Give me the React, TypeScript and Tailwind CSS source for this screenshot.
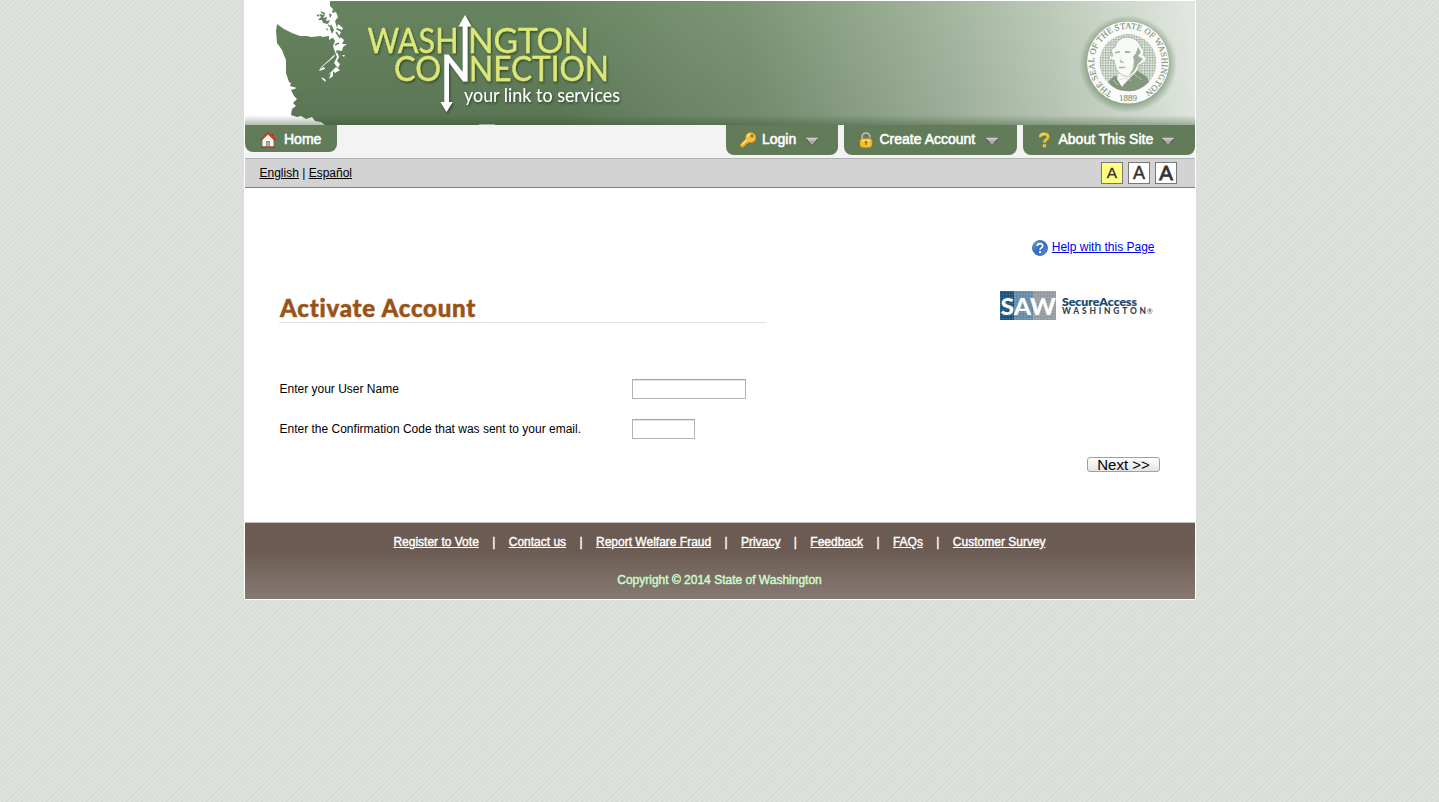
import type { ReactNode } from "react";

const TILE =
  "bg-[#d6dcd6] bg-[repeating-linear-gradient(135deg,rgba(255,255,255,0.18)_0px,rgba(255,255,255,0.18)_1px,transparent_2px,transparent_3.535px),repeating-linear-gradient(45deg,rgba(255,255,255,0.07)_0px,transparent_3px,transparent_7.07px)]";

function Banner() {
  return (
    <svg
      viewBox="245 1 950 124"
      className="block h-[124px] w-[950px]"
      fontFamily="Lato, 'Open Sans', sans-serif"
    >
      <defs>
        <linearGradient id="field" x1="0" y1="0" x2="0" y2="1">
          <stop offset="0" stopColor="#67845f" />
          <stop offset="1" stopColor="#5a7554" />
        </linearGradient>
        <linearGradient id="fade" gradientUnits="userSpaceOnUse" x1="560" y1="110" x2="1190" y2="20">
          <stop offset="0" stopColor="#dfe5dd" stopOpacity="0" />
          <stop offset="0.3" stopColor="#c6d2c2" stopOpacity="0.22" />
          <stop offset="0.65" stopColor="#d3dccf" stopOpacity="0.6" />
          <stop offset="1" stopColor="#e4e9e3" stopOpacity="0.98" />
        </linearGradient>
        <linearGradient id="base" x1="0" y1="0" x2="0" y2="1">
          <stop offset="0" stopColor="#2d4a28" stopOpacity="0" />
          <stop offset="1" stopColor="#2d4a28" stopOpacity="0.36" />
        </linearGradient>
        <radialGradient id="glow">
          <stop offset="0.75" stopColor="#5f7f58" stopOpacity="0.75" />
          <stop offset="1" stopColor="#5f7f58" stopOpacity="0" />
        </radialGradient>
        <filter id="drop" x="-5%" y="-10%" width="110%" height="130%">
          <feDropShadow dx="1" dy="1.5" stdDeviation="0.8" floodColor="#20361c" floodOpacity="0.75" />
        </filter>
        <pattern id="dots" width="2.6" height="2.6" patternUnits="userSpaceOnUse">
          <rect width="2.6" height="2.6" fill="#f4f6f3" />
          <path d="M0 .7H2.6M.7 0V2.6" stroke="#94a78f" strokeWidth="0.75" />
        </pattern>
        <path id="ring" d="M1113.2 92.9A33.8 33.8 0 1 1 1142.8 92.9" />
      </defs>

      <rect x="245" y="1" width="950" height="124" fill="url(#field)" />
      <rect x="245" y="1" width="950" height="124" fill="url(#fade)" />

      <g fill="#fff">
        <path d="M245 1H330L330 6L333 9L332 13L336 12L338 17L335 21L337 28L334 31L334 37L329 40L329 36L322 37L321 36L311 37L307 36L300 36L292 33L284 29L277 24L276 31L277 43L282 50L286 60L286 73L289 82L291 83L290 86L297 88L291 90L294 96L297 99L293 103L296 106L292 109L291 115L297 117L301 116L306 119L312 117L315 121L321 122L325 125H245Z" />
        <path d="M334 28L341 32L339 36L344 40L342 44L347 44L343 47L342 51L337 50L339 57L337 61L340 64L338 68L334 63L337 57L335 52L333 46L335 41L332 36ZM335 54L329 60L321 67L319 71L325 69L324 67L320 69L322 67L334 57ZM336 67L340 70L335 73L333 71L333 76L329 79L331 73L328 75ZM321 77L325 79L326 82L323 80ZM338 24L343 28L342 30L337 28ZM342 55L345 55L344 57Z" />
      </g>
      <path
        d="M319 14L325 15L323 18L327 17L326 21L330 20L328 24L323 23L322 20L318 20L321 17ZM329 13L332 15L330 18ZM331 24L334 30L332 34L330 29ZM326 28L328 29L327 31"
        fill="#66825e"
      />
      <path
        d="M317 15L319 16M321 12L325 14M328 25L331 27M336 32L340 38M335 45L339 43M336 51L341 56"
        stroke="#66825e"
        strokeWidth="1.5"
      />

      <rect x="245" y="115" width="950" height="10" fill="url(#base)" />
      <rect x="479" y="124" width="16" height="1" fill="#9cad96" />

      <g filter="url(#drop)">
        <g fill="#dbe777" stroke="#dbe777" strokeWidth="0.35" fontSize="35">
          <text x="367.5" y="52.5" textLength="91" lengthAdjust="spacingAndGlyphs">WASH</text>
          <text x="468" y="52.5" textLength="121" lengthAdjust="spacingAndGlyphs">NGTON</text>
          <text x="394" y="81" textLength="47" lengthAdjust="spacingAndGlyphs">CO</text>
          <text x="469" y="81" textLength="140" lengthAdjust="spacingAndGlyphs">NECTION</text>
        </g>
        <path
          d="M465 15L471.5 26.5H467.5V81.5H463L449 62.5V102H452.7L446.5 112L440.5 102H444.3V54.5H448.5L462.7 72V26.5H458.5Z"
          fill="#fff"
        />
        <text x="464" y="101.5" fill="#fff" fontSize="19.5" textLength="156" lengthAdjust="spacingAndGlyphs">
          your link to services
        </text>
      </g>

      <circle cx="1128" cy="64" r="49" fill="url(#glow)" />
      <circle cx="1128" cy="62.5" r="41" fill="#fbfcfa" />
      <circle cx="1128" cy="62.5" r="28.5" fill="url(#dots)" />
      <g fill="#7d9177" stroke="#7d9177" strokeWidth="0.15" fontFamily="'Liberation Serif', serif" fontSize="8.6">
        <text>
          <textPath href="#ring" textLength="178" startOffset="1">THE SEAL OF THE STATE OF WASHINGTON</textPath>
        </text>
        <text fontSize="9" x="1119" y="100.5">1889</text>
      </g>
      <path d="M1108 82L1114 76L1120 77L1123 70L1138 71L1147 77L1149 82Q1138 93 1126 91Q1115 91 1108 82Z" fill="#82967d" />
      <path d="M1120 69L1117 79L1122 87L1128 80L1135 73L1134 68Z" fill="#fbfcfa" />
      <path
        d="M1114 60L1110 61L1109 57L1112 54L1111 50L1115 47Q1117 38 1127 37Q1138 38 1141 47L1144 51L1143 55L1147 58L1145 62L1139 65Q1138 74 1128 77Q1117 75 1115 65Z"
        fill="#f8faf7"
        stroke="#9caf98"
        strokeWidth="0.7"
      />
      <path
        d="M1138 47L1141 52L1138 56L1143 59L1138 64L1136 68Q1134 73 1129 75L1133 69L1134 61L1133 57L1136 53ZM1115 52L1120 51L1120 52.5L1115 53.5ZM1125 51L1131 51.5L1130 53L1125 53ZM1122 53L1121 61L1124 62L1123 63L1119.5 62L1121 59ZM1119 67L1126 66.5L1124 68.3L1119 68.3ZM1112 51L1113 56L1111 58L1113 61L1111 61Z"
        fill="#9fb19a"
      />
      <path d="M1119 80L1125 78L1131 81M1122 86L1129 79M1134 74L1142 80M1113 80L1118 85" stroke="#c6d1c2" strokeWidth="0.7" fill="none" />
    </svg>
  );
}

function HomeIcon() {
  return (
    <svg viewBox="0 0 16 16" className="h-4 w-4 shrink-0">
      <path d="M2.5 7.5V14.5H13.5V7.5L8 2Z" fill="#f5f5f3" stroke="#b9bbb4" strokeWidth=".5" />
      <path d="M6.3 9H9.8V15H6.3Z" fill="#777" />
      <path d="M7 9.8H9V15H7Z" fill="#aeb0ae" />
      <path d="M.8 8L8 1.3L15.2 8" fill="none" stroke="#c52c1c" strokeWidth="1.8" />
      <path d="M1.7 7.1L8 1.5L14.3 7.1" fill="none" stroke="#ec7b5f" strokeWidth=".5" />
      <path d="M11.5 1.5H13.5V5L11.5 3.3ZM1 14.5H15V15.7H1Z" fill="#c52c1c" />
    </svg>
  );
}

function KeyIcon() {
  return (
    <svg viewBox="0 0 16 16" className="h-4 w-4 shrink-0">
      <path
        d="M10.6.6A5 5 0 0 0 5.8 7L.6 12.2V14.8L3.7 15.3V13.6H5.5V11.8H7.2L8.7 10.1A5 5 0 1 0 10.6.6Z"
        fill="#f6c23d"
        stroke="#d28b1c"
        strokeWidth=".8"
      />
      <path d="M6.8 7.6L1.5 12.9" stroke="#ffe995" strokeWidth="1.1" />
      <path d="M7.3 4.6A3.5 3.5 0 0 1 10.6 1.8" stroke="#ffec9a" strokeWidth="1.1" fill="none" />
      <circle cx="12" cy="4" r="1.4" fill="#627c59" stroke="#c98515" strokeWidth=".6" />
    </svg>
  );
}

function LockIcon() {
  return (
    <svg viewBox="0 0 16 16" className="h-4 w-4 shrink-0">
      <path d="M4.2 7V4.7A3.8 3.7 0 0 1 11.8 4.7V7" fill="none" stroke="#8c8f8d" strokeWidth="2.2" />
      <path d="M4 6.5V4.7A4 3.8 0 0 1 12 4.7" fill="none" stroke="#d1d4d2" strokeWidth=".9" />
      <rect x="2" y="6.4" width="12" height="9" rx="3" fill="#f6c232" stroke="#d28a18" strokeWidth=".8" />
      <path d="M3.4 8H12.5V9H3.4Z" fill="#ffe47d" />
      <path d="M8 8.7A1.4 1.4 0 0 0 7.2 11.2V13H8.8V11.2A1.4 1.4 0 0 0 8 8.7Z" fill="#a66a13" />
    </svg>
  );
}

function QuestionIcon() {
  return (
    <svg viewBox="0 0 16 16" className="h-4 w-4 shrink-0">
      <path d="M4.2 5.2Q4.2 2 8 2Q12 2 12 4.8Q12 6.6 10 7.8Q8.4 8.8 8.4 10.7" fill="none" stroke="#eebf38" strokeWidth="2.8" />
      <path d="M6.8 12.2H10V15.3H6.8Z" fill="#eebf38" />
      <path d="M4 3.2Q5.7 1.3 8.8 1.7" fill="none" stroke="#ffe27a" strokeWidth="1" />
    </svg>
  );
}

function Caret() {
  return (
    <svg viewBox="0 0 14 10" className="mt-[4px] h-[10px] w-[14px] shrink-0">
      <path d="M1 1.5H13L7.8 8Q7 9 6.2 8Z" fill="#aaa4ac" stroke="#4a5447" strokeWidth="1" />
      <path d="M1.2 1.3H12.8" stroke="#eee" strokeWidth="1" />
      <path d="M3 2.8H11" stroke="#cbc6cd" strokeWidth="1" />
    </svg>
  );
}

function Tab({ icon, label, menu = false, className }: { icon: ReactNode; label: string; menu?: boolean; className: string }) {
  return (
    <a
      className={`flex items-start rounded-b-[8px] bg-[#627c59] pt-[6px] text-[14px] leading-[17px] whitespace-nowrap text-white [-webkit-text-stroke:0.55px_white] ${className}`}
    >
      <span className="mt-[1px] flex">{icon}</span>
      {label}
      {menu && <span className="ml-[9px] mt-[2px] flex"><Caret /></span>}
    </a>
  );
}

function SizeButton({ className }: { className: string }) {
  return (
    <button
      className={`flex h-[22px] w-[22px] items-center justify-center border border-[#777] leading-none text-[#333] ${className}`}
    >
      A
    </button>
  );
}

function HelpIcon() {
  return (
    <svg viewBox="0 0 16 16" className="h-4 w-4">
      <defs>
        <linearGradient id="ball" x1="0" y1="0" x2="1" y2="1">
          <stop offset="0" stopColor="#75a9e3" />
          <stop offset="0.5" stopColor="#3269c0" />
          <stop offset="1" stopColor="#6197dc" />
        </linearGradient>
      </defs>
      <circle cx="8" cy="8" r="7.5" fill="url(#ball)" stroke="#2c5aa8" strokeWidth=".8" />
      <path d="M5.3 6Q5.3 3.6 8 3.6Q10.7 3.6 10.7 5.8Q10.7 7.1 9.2 7.9Q8 8.6 8 9.8" fill="none" stroke="#fff" strokeWidth="1.7" />
      <rect x="7.1" y="11.1" width="1.9" height="1.9" fill="#fff" />
    </svg>
  );
}

function SawLogo() {
  return (
    <svg viewBox="0 0 155 30" className="block h-[30px] w-[155px]" fontFamily="Lato, sans-serif">
      <defs>
        <pattern id="weave" width="3" height="3" patternUnits="userSpaceOnUse">
          <path d="M0 .5H3M.5 0V3" stroke="#fff" strokeOpacity=".13" strokeWidth=".7" />
        </pattern>
      </defs>
      <rect width="14" height="29" fill="#174f78" />
      <rect x="14" width="19" height="29" fill="#6289a5" />
      <rect x="33" width="23" height="29" fill="#929a9f" />
      <rect width="56" height="29" fill="url(#weave)" />
      <text x="0.5" y="23.5" fill="#fff" fontWeight="900" fontSize="22.5" textLength="55.5" lengthAdjust="spacingAndGlyphs">SAW</text>
      <text x="62" y="15" fill="#174a70" stroke="#174a70" strokeWidth="0.2" fontWeight="900" fontSize="10.5" textLength="75" lengthAdjust="spacingAndGlyphs">SecureAccess</text>
      <text x="62" y="23.3" fill="#34454f" fontWeight="900" fontSize="8.4" textLength="84" lengthAdjust="spacing">WASHINGTON</text>
      <text x="147" y="22.5" fill="#34454f" fontSize="7">®</text>
    </svg>
  );
}

const footerLinks = ["Register to Vote", "Contact us", "Report Welfare Fraud", "Privacy", "Feedback", "FAQs", "Customer Survey"];

const fieldBox = "h-5 border border-[#b4b4b4] border-t-[#a4a4a4] bg-white shadow-[inset_0_1px_0_#e6e6e6] outline-none";

export default function App() {
  return (
    <div className={`flex min-h-screen justify-center font-['Liberation_Sans',Arial,sans-serif] text-[12px] text-black ${TILE}`}>
      <div className="ml-px h-[600px] w-[952px] border border-white bg-white">
        <Banner />

        <nav className="flex h-[33px] items-start justify-between bg-[#f3f3f3]">
          <Tab icon={<HomeIcon />} label="Home" className="h-[27px] w-[92px] gap-[8px] pl-[15px]" />
          <div className="flex gap-[6px]">
            <Tab icon={<KeyIcon />} label="Login" menu className="h-[30px] w-[112px] gap-[6px] pl-[14px] [&>span:last-child]:ml-[3px]" />
            <Tab icon={<LockIcon />} label="Create Account" menu className="h-[30px] w-[173px] gap-[5.5px] pl-[14px] [&>span:last-child]:ml-[4px]" />
            <Tab icon={<QuestionIcon />} label="About This Site" menu className="h-[30px] w-[172px] gap-[6.5px] pl-[13px] [&>span:last-child]:ml-[1px]" />
          </div>
        </nav>

        <div className="flex h-[30px] items-start justify-between border-t border-b border-t-[#b2b2b2] border-b-[#808080] bg-[#d3d3d3] pr-[18px] pl-[14.5px]">
          <div className="pt-[6px] leading-4">
            <a className="underline">English</a> | <a className="underline">Español</a>
          </div>
          <div className="flex gap-[5px] pt-[3px]">
            <SizeButton className="bg-[#ffff80] text-[15.5px] [-webkit-text-stroke:0.3px_#333]" />
            <SizeButton className="bg-white text-[18px] [-webkit-text-stroke:0.5px_#333]" />
            <SizeButton className="bg-white text-[20.5px] [-webkit-text-stroke:0.8px_#333]" />
          </div>
        </div>

        <main className="flex h-[334px] flex-col pr-[35px] pl-[34px]">
          <div className="mt-[51px] flex justify-end gap-[4px] pr-[5.5px]">
            <span className="mt-[1px]"><HelpIcon /></span>
            <a className="leading-4 text-[#0000ee] underline">Help with this Page</a>
          </div>

          <div className="mt-[35px] flex h-[32px] items-start justify-between pr-[5px]">
            <h1 className="h-[32px] w-[487px] border-b border-[#e2e2e2] pl-px font-[Lato] text-[24px] leading-[33px] font-black tracking-[0.75px] text-[#9a5316] [font-variant-ligatures:none] [-webkit-text-stroke:0.5px_#9a5316]">
              Activate Account
            </h1>
            <SawLogo />
          </div>

          <div className="mt-[56px] flex h-5 items-center pl-[0.5px]">
            <label className="w-[352.5px]">Enter your User Name</label>
            <input className={`w-[114px] ${fieldBox}`} />
          </div>
          <div className="mt-5 flex h-5 items-center pl-[0.5px]">
            <label className="w-[352.5px]">Enter the Confirmation Code that was sent to your email.</label>
            <input className={`w-[63px] ${fieldBox}`} />
          </div>

          <div className="mt-[18px] flex justify-end">
            <button className="flex h-[15px] w-[73px] items-center justify-center rounded-[3px] border border-[#a0a0a0] bg-linear-to-b from-white to-[#e4e4e4] text-[15px] leading-none">
              Next &gt;&gt;
            </button>
          </div>
        </main>

        <footer className="h-[77px] border-t border-[#c8c0ba] bg-linear-to-b from-[#6b5b53] from-35% to-[#877a72] text-white [-webkit-text-stroke:0.4px]">
          <div className="flex justify-center pt-[11px] pr-px leading-4">
            {footerLinks.map((label, i) => (
              <span key={label} className="flex">
                {i > 0 && <span className="px-[13.4px]">|</span>}
                <a className="underline">{label}</a>
              </span>
            ))}
          </div>
          <p className="mt-[22px] pr-px text-center leading-4 text-[#ccffcc]">Copyright © 2014 State of Washington</p>
        </footer>
      </div>
    </div>
  );
}
